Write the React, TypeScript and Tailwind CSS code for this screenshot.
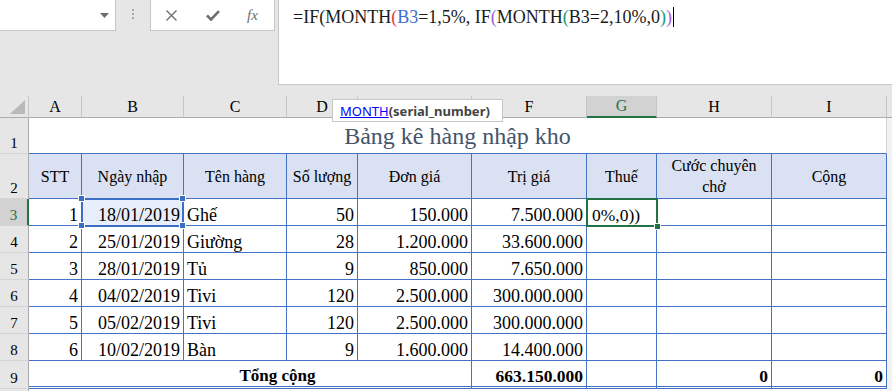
import React from "react";

const rows = [
  ["1", "18/01/2019", "Ghế", "50", "150.000", "7.500.000"],
  ["2", "25/01/2019", "Giường", "28", "1.200.000", "33.600.000"],
  ["3", "28/01/2019", "Tủ", "9", "850.000", "7.650.000"],
  ["4", "04/02/2019", "Tivi", "120", "2.500.000", "300.000.000"],
  ["5", "05/02/2019", "Tivi", "120", "2.500.000", "300.000.000"],
  ["6", "10/02/2019", "Bàn", "9", "1.600.000", "14.400.000"],
];

function ColHead({ label, active }: { label: string; active?: boolean }) {
  if (active)
    return (
      <div className="flex items-center justify-center border-r border-b-2 border-r-[#c6c6c6] border-b-[#217346] bg-[#d2d2d2] text-[16px] leading-[20px] text-[#217346]">
        {label}
      </div>
    );
  return (
    <div className="flex items-center justify-center border-r border-b border-r-[#c6c6c6] border-b-[#ababab] text-[16px] leading-[20px]">
      {label}
    </div>
  );
}

function RowHead({ n, active }: { n: string; active?: boolean }) {
  if (active)
    return (
      <div className="flex items-end justify-center border-r-2 border-b border-r-[#217346] border-b-[#d4d4d4] bg-[#d2d2d2] text-[15px] leading-[20px] text-[#217346]">
        {n}
      </div>
    );
  return (
    <div className="flex items-end justify-center border-r border-b border-r-[#ababab] border-b-[#d4d4d4] bg-[#e6e6e6] text-[15px] leading-[20px]">
      {n}
    </div>
  );
}

function Head2({ children }: { children: React.ReactNode }) {
  return (
    <div className="flex items-center justify-center border-r border-b border-[#4472c4] bg-[#d9e1f2] text-center text-[16px] leading-[21px]">
      {children}
    </div>
  );
}

function NumCell({ v }: { v: string }) {
  return (
    <div className="flex items-end justify-end border-r border-b border-[#4472c4] bg-white px-[3px] text-[18px] leading-[20px]">
      {v}
    </div>
  );
}

function TextCell({ v }: { v: string }) {
  return (
    <div className="flex items-end justify-start border-r border-b border-[#4472c4] bg-white px-[3px] text-[18px] leading-[20px]">
      {v}
    </div>
  );
}

function Filler() {
  return <div className="bg-[#f2f2f2]" />;
}

export default function App() {
  return (
    <div className="relative h-[391px] w-[892px] overflow-hidden bg-[#e6e6e6] font-['Liberation_Serif',serif] text-black">
      {/* Formula bar */}
      <div className="flex h-[85px] items-start">
        <div className="flex h-[31px] w-[116px] items-center justify-end border-r border-b border-[#c6c6c6] bg-white pr-[6px]">
          <svg width="9" height="5" viewBox="0 0 9 5">
            <path d="M0 0 H9 L4.5 5 Z" fill="#6d6d6d" />
          </svg>
        </div>
        <div className="flex h-[31px] w-[34px] flex-col items-center gap-[2px] pt-[9px]">
          <div className="h-[2px] w-[2px] bg-[#a6a6a6]" />
          <div className="h-[2px] w-[2px] bg-[#a6a6a6]" />
          <div className="h-[2px] w-[2px] bg-[#a6a6a6]" />
        </div>
        <div className="flex h-[31px] w-[125px] items-center border-l border-r border-b border-[#c6c6c6] bg-white">
          <svg className="ml-[15px]" width="11" height="11" viewBox="0 0 11 11">
            <path d="M0.5 0.5 L10.5 10.5 M10.5 0.5 L0.5 10.5" stroke="#6f6f6f" strokeWidth="1.4" fill="none" />
          </svg>
          <svg className="ml-[29px]" width="14" height="11" viewBox="0 0 14 11">
            <path d="M1 5.5 L5 9.5 L13 1.2" stroke="#6f6f6f" strokeWidth="2.6" fill="none" />
          </svg>
          <span className="ml-[27px] font-['Liberation_Serif',serif] text-[15px] italic leading-[20px] text-[#6f6f6f]">
            fx
          </span>
        </div>
        <div className="w-[3px]" />
        <div className="h-[85px] flex-1 border-l border-b border-[#c6c6c6] bg-white pl-[14px] pt-[5px] text-[18px] leading-[24px] text-[#1a1a1a]">
          <span>=IF(MONTH</span>
          <span className="text-[#e0393e]">(</span>
          <span className="text-[#3a6fd0]">B3</span>
          <span>=1,5%, IF</span>
          <span className="text-[#9b5fd6]">(</span>
          <span>MONTH</span>
          <span className="text-[#169a78]">(</span>
          <span>B3=2,10%,0</span>
          <span className="text-[#169a78]">)</span>
          <span className="text-[#9b5fd6]">)</span>
          <span className="ml-[1px] inline-block h-[20px] w-px bg-black align-[-4px]" />
        </div>
      </div>

      {/* Sheet grid */}
      <div className="mt-[11px] grid grid-cols-[29px_53px_102px_103px_71px_114px_115px_70px_115px_115px_5px] grid-rows-[22px_36px_45px_27px_27px_27px_27px_27px_27px_28px_27px]">
        {/* header row */}
        <div className="relative border-r border-b border-r-[#c6c6c6] border-b-[#ababab]">
          <svg className="absolute left-[10px] top-[4px]" width="15" height="14" viewBox="0 0 15 14">
            <path d="M15 0 V14 H0 Z" fill="#b9b9b9" />
          </svg>
        </div>
        <ColHead label="A" />
        <ColHead label="B" />
        <ColHead label="C" />
        <ColHead label="D" />
        <ColHead label="E" />
        <ColHead label="F" />
        <ColHead label="G" active />
        <ColHead label="H" />
        <ColHead label="I" />
        <div className="border-b border-b-[#ababab]" />

        {/* row 1 */}
        <RowHead n="1" />
        <div className="col-span-9 flex items-center justify-center border-r border-b border-r-[#d4d4d4] border-b-[#4472c4] bg-white pt-[1px] text-[24px] leading-[28px] text-[#44546a]">
          Bảng kê hàng nhập kho
        </div>
        <Filler />

        {/* row 2 */}
        <RowHead n="2" />
        <Head2>STT</Head2>
        <Head2>Ngày nhập</Head2>
        <Head2>Tên hàng</Head2>
        <Head2>Số lượng</Head2>
        <Head2>Đơn giá</Head2>
        <Head2>Trị giá</Head2>
        <Head2>Thuế</Head2>
        <Head2>
          <span>
            Cước chuyên
            <br />
            chở
          </span>
        </Head2>
        <Head2>Cộng</Head2>
        <Filler />

        {/* data rows */}
        {rows.map((r, i) => (
          <React.Fragment key={i}>
            <RowHead n={String(i + 3)} active={i === 0} />
            <NumCell v={r[0]} />
            {i === 0 ? (
              <div className="relative flex items-end justify-end border-r border-b border-[#4472c4] bg-[#e8eef9] px-[3px] text-[18px] leading-[20px]">
                {r[1]}
                <div className="pointer-events-none absolute left-[-1px] top-[-1px] z-10 h-[29px] w-[103px] border-2 border-[#3b6fc6]" />
                <div className="absolute left-[-4px] top-[-4px] z-10 h-[7px] w-[7px] border border-white bg-[#3b6fc6]" />
                <div className="absolute left-[97px] top-[-4px] z-10 h-[7px] w-[7px] border border-white bg-[#3b6fc6]" />
                <div className="absolute left-[-4px] top-[23px] z-10 h-[7px] w-[7px] border border-white bg-[#3b6fc6]" />
                <div className="absolute left-[97px] top-[23px] z-10 h-[7px] w-[7px] border border-white bg-[#3b6fc6]" />
              </div>
            ) : (
              <NumCell v={r[1]} />
            )}
            <TextCell v={r[2]} />
            <NumCell v={r[3]} />
            <NumCell v={r[4]} />
            <NumCell v={r[5]} />
            {i === 0 ? (
              <div className="relative flex items-end justify-start border-r border-b border-[#4472c4] bg-white pl-[5px] text-[17.5px] leading-[20px]">
                0%,0))
                <div className="pointer-events-none absolute left-[-1px] top-[-1px] z-10 h-[29px] w-[72px] border-2 border-[#217346]" />
                <div className="absolute left-[67px] top-[24px] z-10 h-[7px] w-[7px] border border-white bg-[#217346]" />
              </div>
            ) : (
              <TextCell v="" />
            )}
            <TextCell v="" />
            <TextCell v="" />
            <Filler />
          </React.Fragment>
        ))}

        {/* row 9 */}
        <RowHead n="9" />
        <div className="col-span-5 flex items-end justify-center border-r border-b-[3px] border-[#4472c4] bg-white pl-[55px] text-[17px] font-bold leading-[20px] [border-bottom-style:double]">
          Tổng cộng
        </div>
        <div className="flex items-end justify-end border-r border-b-[3px] border-[#4472c4] bg-white px-[3px] text-[17.5px] font-bold leading-[20px] [border-bottom-style:double]">
          663.150.000
        </div>
        <div className="border-r border-b-[3px] border-[#4472c4] bg-white [border-bottom-style:double]" />
        <div className="flex items-end justify-end border-r border-b-[3px] border-[#4472c4] bg-white px-[3px] text-[17.5px] font-bold leading-[20px] [border-bottom-style:double]">
          0
        </div>
        <div className="flex items-end justify-end border-r border-b-[3px] border-[#4472c4] bg-white px-[3px] text-[17.5px] font-bold leading-[20px] [border-bottom-style:double]">
          0
        </div>
        <Filler />

        {/* row 10 (cut) */}
        <div className="flex items-start justify-center border-r border-r-[#ababab] bg-[#e6e6e6] pt-[1px] text-[15px] leading-[20px]">
          10
        </div>
        <div className="col-span-9 bg-white" />
        <Filler />
      </div>

      {/* Tooltip */}
      <div className="absolute left-[332px] top-[99px] z-20 flex h-[23px] w-[171px] items-center border border-[#c6c6c6] bg-white pl-[7px] font-['Noto_Sans',sans-serif] text-[13px] leading-[18px]">
        <span className="text-[#0000ff] underline">MONTH</span>
        <span className="font-bold text-[#444444]">(serial_number)</span>
      </div>
    </div>
  );
}
